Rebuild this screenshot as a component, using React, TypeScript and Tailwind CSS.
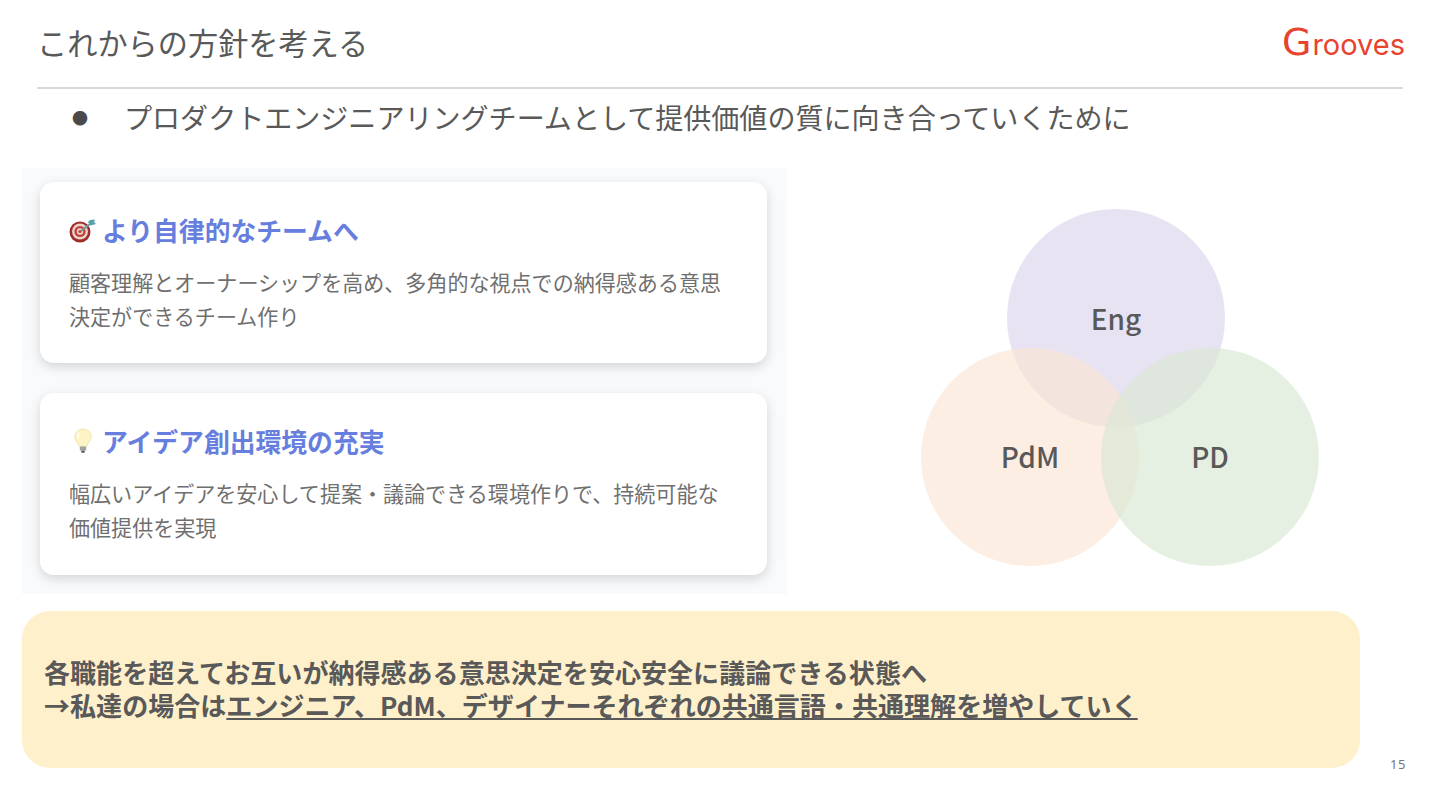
import React from "react";

const JP = '"Noto Sans CJK JP","Noto Sans",sans-serif';

function Target() {
  return (
    <svg viewBox="0 0 28 26" className="w-[28px] h-[26px] shrink-0">
      <circle cx="11" cy="15" r="10.5" fill="#9c2f2b" />
      <circle cx="11" cy="14.5" r="8" fill="#ecd2ca" />
      <circle cx="11" cy="14.5" r="5.6" fill="#c2403a" />
      <circle cx="11" cy="14.5" r="3.2" fill="#eed8d0" />
      <circle cx="11" cy="14.5" r="1.6" fill="#c2403a" />
      <path d="M12 14 L21 7" stroke="#6f9aa0" strokeWidth="2" />
      <path d="M19 5 L21.5 8.5 L27 7 L25 5 L26 2.5 L21 3 Z" fill="#55a3ad" />
    </svg>
  );
}

function Bulb() {
  return (
    <svg viewBox="0 0 22 28" className="w-[20px] h-[26px] shrink-0">
      <path d="M11 1 C5 1 2 5 2 9.5 C2 14 6 16 7 20 L15 20 C16 16 20 14 20 9.5 C20 5 17 1 11 1 Z" fill="#fdf3c4" stroke="#efe2a4" />
      <path d="M7 5 C5 7 5 9 6 11" stroke="#fffdf0" strokeWidth="2.5" fill="none" />
      <rect x="7.5" y="20" width="7" height="4.5" rx="1" fill="#a0a2a4" />
      <rect x="9" y="24.5" width="4" height="2.5" rx="1" fill="#5c5f63" />
    </svg>
  );
}

function Card({ icon, title, l1, l2, cls }: { icon: React.ReactNode; title: string; l1: string; l2: string; cls: string }) {
  return (
    <div className={`w-[727px] bg-white rounded-[14px] shadow-[0_4px_12px_rgba(0,0,0,0.15)] pl-[29px] pt-[28px] ${cls}`}>
      <div className="flex items-center gap-[6px] h-[40px]">
        <span className="w-[27px] flex justify-center">{icon}</span>
        <span className="text-[25.8px] font-bold text-[#667ede] leading-[40px]">{title}</span>
      </div>
      <div className="mt-[15px] text-[21.05px] leading-[34px] text-[#6f6f6f]">
        <div>{l1}</div>
        <div>{l2}</div>
      </div>
    </div>
  );
}

function Circle({ cls, label }: { cls: string; label: string }) {
  return (
    <div className={`absolute w-[218px] h-[218px] rounded-full flex items-center justify-center ${cls}`}>
      <span className="text-[28px] font-medium text-[#595959]">{label}</span>
    </div>
  );
}

export default function App() {
  return (
    <div className="w-[1440px] h-[810px] bg-white overflow-hidden" style={{ fontFamily: JP }}>
      <header className="mx-[37px] h-[89px] border-b-2 border-[#d9d9d9] flex items-start justify-between">
        <h1 className="text-[30.2px] font-normal leading-[44px] pt-[20px] text-[#595959]">これからの方針を考える</h1>
        <div className="pt-[20px] mr-[-2px] flex items-baseline text-[#e8432f] leading-[44px]">
          <span className="text-[38px]" style={{ fontFamily: '"DejaVu Sans",sans-serif' }}>G</span>
          <span className="text-[29px] font-normal ml-[1px]" style={{ fontFamily: '"Inter",sans-serif' }}>rooves</span>
        </div>
      </header>

      <ul className="h-[79px] pl-[72px] text-[28.05px] font-normal text-[#595959]">
        <li className="flex items-center h-[56px]">
          <span className="w-[52px] text-[16px] text-[#4a4a4a]">●</span>
          <span>プロダクトエンジニアリングチームとして提供価値の質に向き合っていくために</span>
        </li>
      </ul>

      <main className="flex h-[426px] ml-[22px]">
        <section className="w-[765px] h-full bg-[#f8fafc] pl-[18px] pt-[14px]">
          <Card icon={<Target />} title="より自律的なチームへ" l1="顧客理解とオーナーシップを高め、多角的な視点での納得感ある意思" l2="決定ができるチーム作り" cls="h-[181px]" />
          <Card icon={<Bulb />} title="アイデア創出環境の充実" l1="幅広いアイデアを安心して提案・議論できる環境作りで、持続可能な" l2="価値提供を実現" cls="h-[182px] mt-[30px]" />
        </section>
        <section className="relative flex-1">
          <Circle cls="left-[220px] top-[41px] bg-[#e1dcf0]/80" label="Eng" />
          <Circle cls="left-[134px] top-[180px] pb-[2px] bg-[#fbe5d3]/65" label="PdM" />
          <Circle cls="left-[314px] top-[180px] pb-[2px] bg-[#d9e8d3]/65" label="PD" />
        </section>
      </main>

      <footer className="flex items-end mt-[17px] ml-[22px]">
        <div className="w-[1338px] h-[157px] bg-[#fff0cc] rounded-[28px] pl-[22px] pt-[45px] text-[26.05px] leading-[33px] font-bold text-[#595959]">
          <div>各職能を超えてお互いが納得感ある意思決定を安心安全に議論できる状態へ</div>
          <div>→私達の場合は<span className="underline underline-offset-[2px]">エンジニア、PdM、デザイナーそれぞれの共通言語・共通理解を増やしていく</span></div>
        </div>
        <span className="ml-[30px] text-[13px] leading-[8px] text-[#757575] tracking-[0.5px]" style={{ fontFamily: '"Noto Sans",sans-serif' }}>15</span>
      </footer>
    </div>
  );
}
